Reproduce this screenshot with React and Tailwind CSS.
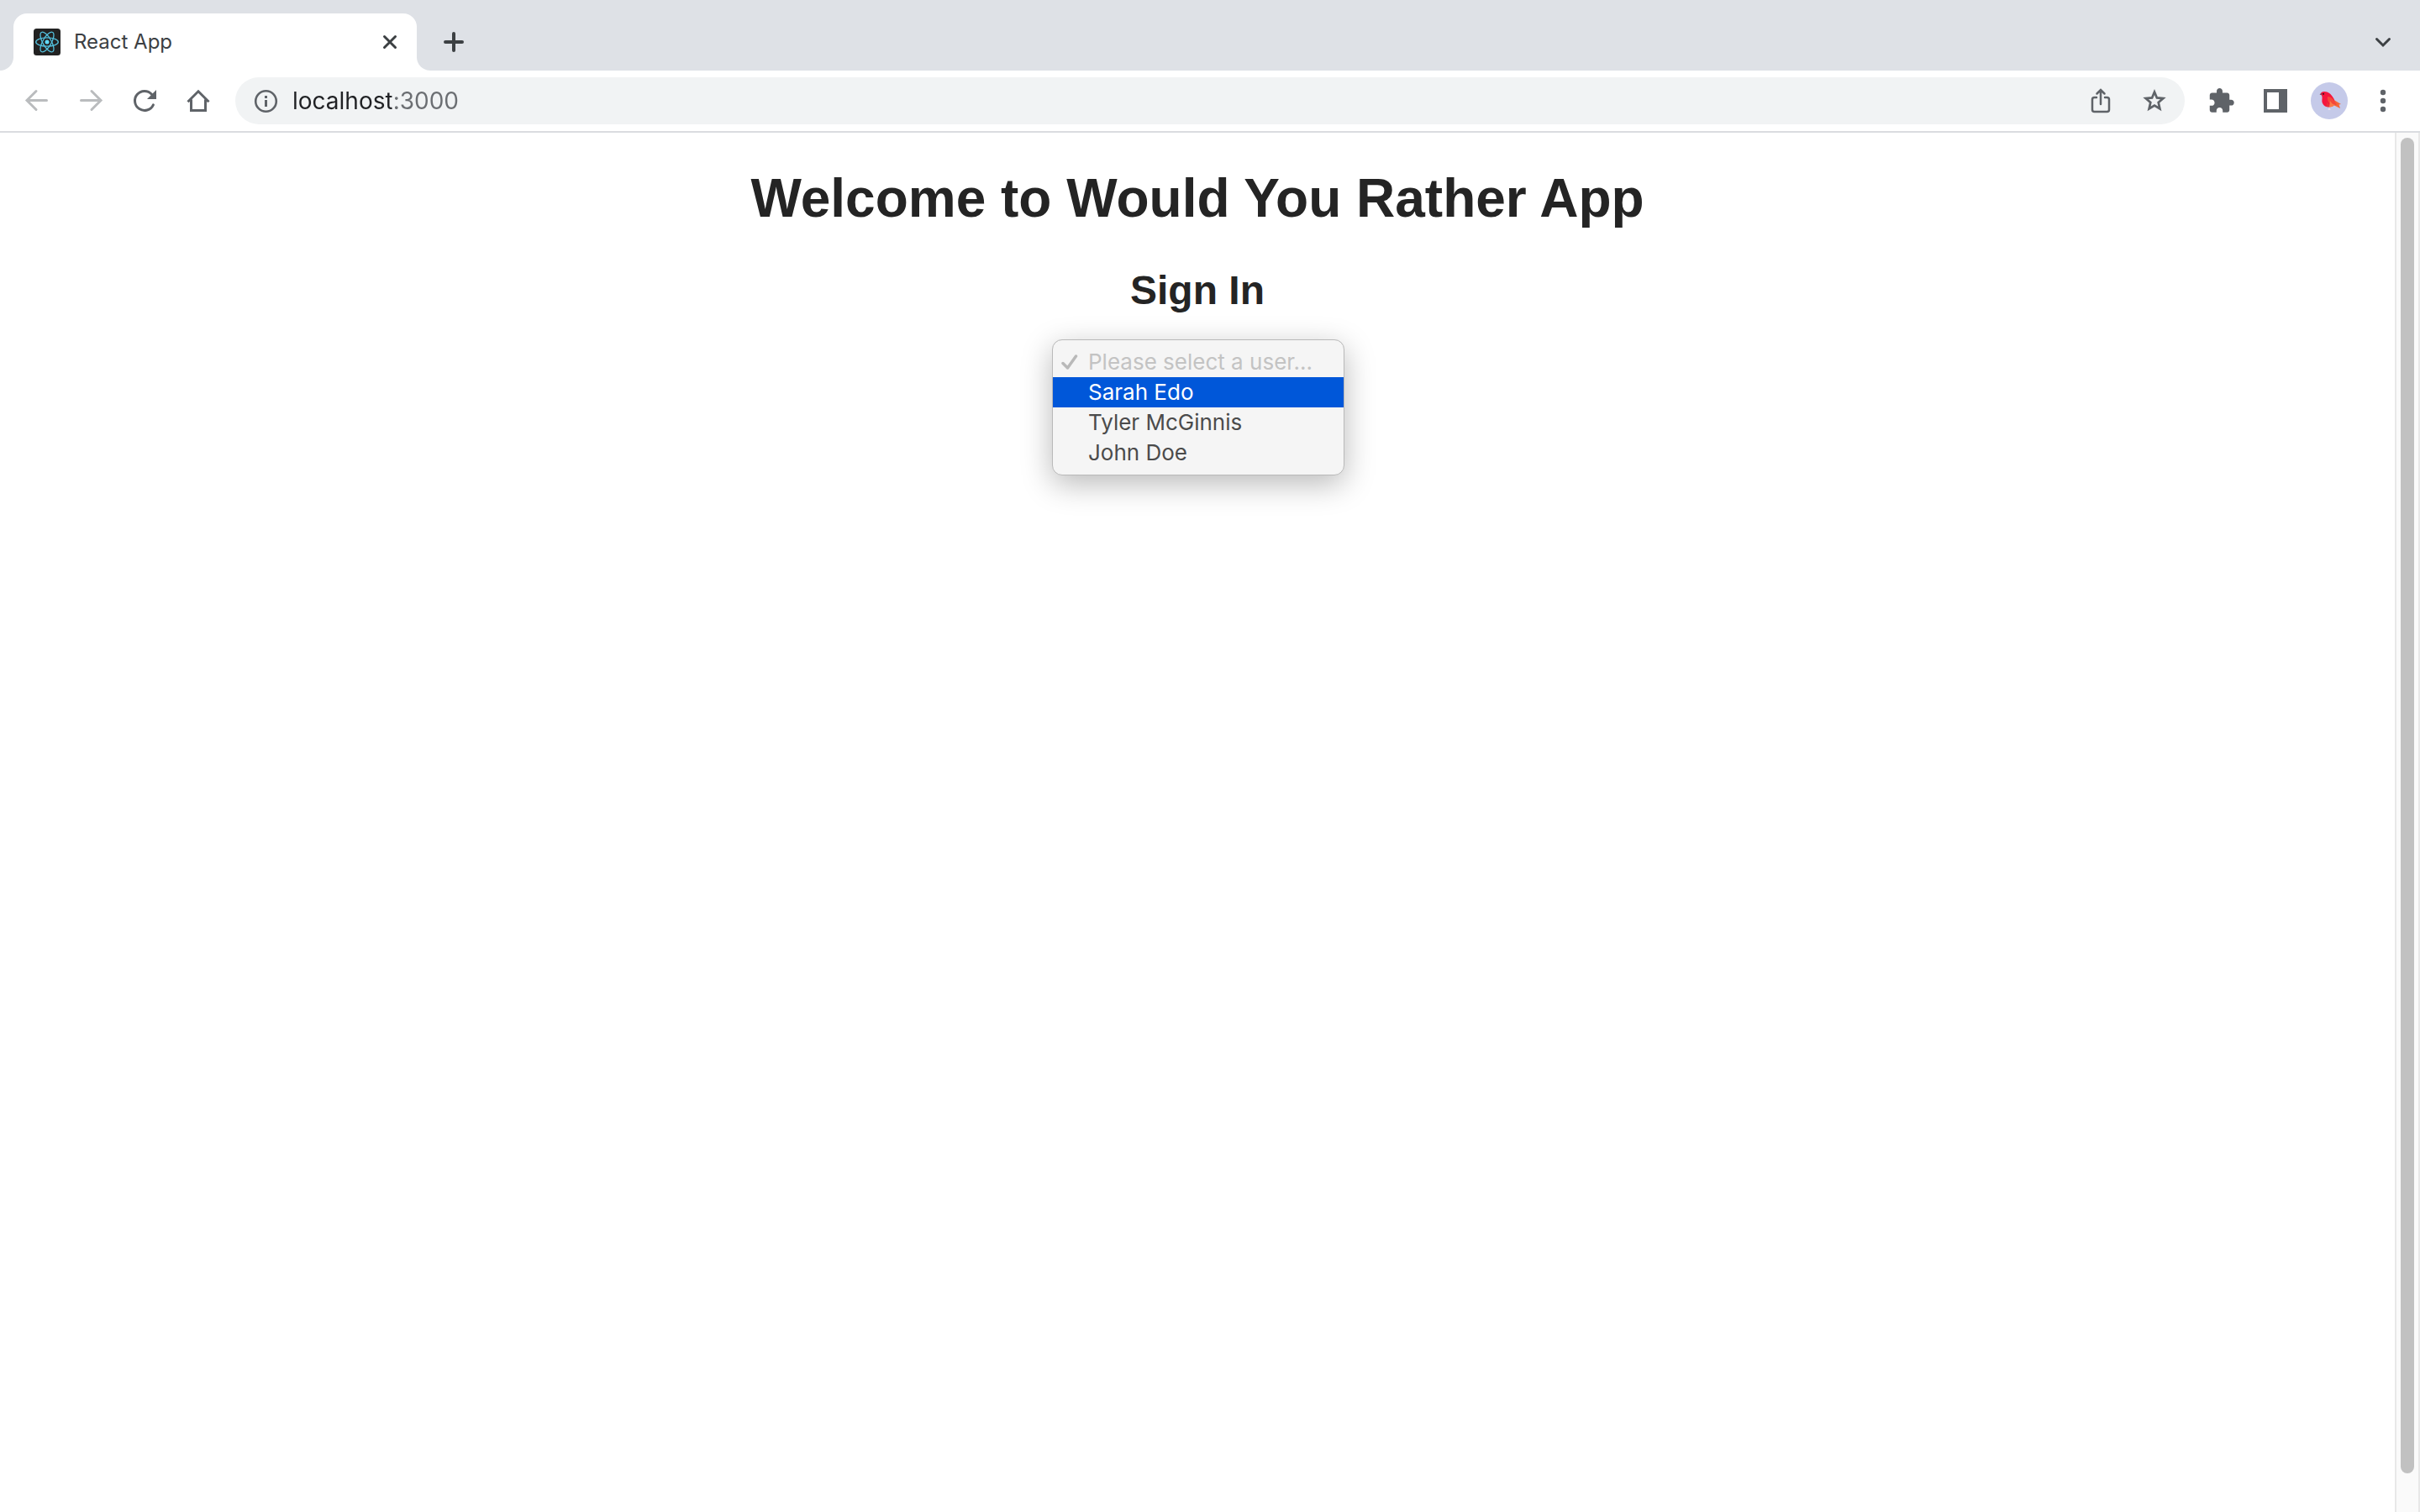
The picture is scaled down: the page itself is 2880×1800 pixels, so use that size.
import { useState } from "react";

const users = ["Sarah Edo", "Tyler McGinnis", "John Doe"];

function ReactLogo() {
  return (
    <svg viewBox="0 0 32 32" className="size-8 shrink-0" aria-hidden="true">
      <rect width="32" height="32" rx="3.5" fill="#222" />
      <g fill="none" stroke="#53c1de" strokeWidth="1.3">
        <ellipse cx="16" cy="16" rx="13.3" ry="5.1" />
        <ellipse cx="16" cy="16" rx="13.3" ry="5.1" transform="rotate(60 16 16)" />
        <ellipse cx="16" cy="16" rx="13.3" ry="5.1" transform="rotate(120 16 16)" />
      </g>
      <circle cx="16" cy="16" r="2.5" fill="#61dafb" />
    </svg>
  );
}

function Icon({ children, label, className = "text-[#5f6368]" }) {
  return (
    <button aria-label={label} className={`flex size-8 shrink-0 items-center justify-center ${className}`}>
      <svg viewBox="0 0 32 32" className="size-8" fill="none" stroke="currentColor" strokeWidth="3" strokeLinecap="round">
        {children}
      </svg>
    </button>
  );
}

function TabStrip() {
  return (
    <header className="flex h-[84px] items-end bg-[#dee1e6] pr-7">
      <div className="size-4 bg-white">
        <div className="size-4 rounded-br-2xl bg-[#dee1e6]" />
      </div>
      <div className="flex h-[68px] w-[480px] items-center rounded-t-2xl bg-white pr-4 pl-6">
        <ReactLogo />
        <span className="ml-4 flex-1 text-[24px] leading-8 text-[#3c4043]">React App</span>
        <Icon label="Close tab" className="text-[#3c4043]">
          <path d="M9.500 9.500 22.500 22.500M22.500 9.500 9.500 22.500" />
        </Icon>
      </div>
      <div className="size-4 bg-white">
        <div className="size-4 rounded-bl-2xl bg-[#dee1e6]" />
      </div>
      <div className="flex h-[68px] flex-1 items-center justify-between pl-3">
        <Icon label="New tab" className="text-[#3c4043]">
          <path strokeWidth="4" d="M16 6V26M6 16H26" />
        </Icon>
        <Icon label="Search tabs" className="text-[#3c4043]">
          <path d="M8.500 12.500 16 20 23.500 12.500" />
        </Icon>
      </div>
    </header>
  );
}

function Toolbar() {
  return (
    <nav className="flex h-[74px] items-center border-b-2 border-[#dadce0] bg-white pr-7 pl-7">
      <div className="flex gap-8">
        <Icon label="Back" className="text-[#babcbe]">
          <path d="M27.500 15.500H5M15 4.500 4 15.500 15 26.500" />
        </Icon>
        <Icon label="Forward" className="text-[#babcbe]">
          <path d="M4.500 15.500H27M17 4.500 28 15.500 17 26.500" />
        </Icon>
        <Icon label="Reload">
          <path d="M26.400 20.800A11.500 11.500 0 1 1 24.500 8.200" />
          <path d="M30 3V14H19Z" fill="currentColor" stroke="none" />
        </Icon>
        <Icon label="Home">
          <path strokeLinejoin="miter" strokeLinecap="butt" d="M3.500 17.300 16 4.800 28.500 17.300M7.500 14.500V27.500H24.500V14.500" />
        </Icon>
      </div>
      <div className="ml-7 flex h-14 flex-1 items-center rounded-full bg-[#f1f3f4] pr-5 pl-5">
        <Icon label="View site information">
          <circle cx="16.500" cy="16.500" r="12.300" strokeWidth="2.600" />
          <path d="M16.500 15V23M16.500 10V13" strokeLinecap="butt" />
        </Icon>
        <input
          aria-label="Address"
          defaultValue="localhost:3000"
          className="ml-4 min-w-0 flex-1 bg-[linear-gradient(to_right,#202124_118px,#6b6e72_118px)] bg-clip-text text-[28px] leading-10 text-transparent outline-none"
        />
        <div className="flex gap-8">
          <Icon label="Share">
            <path strokeWidth="2.500" d="M16 20V4M11.500 7.500 16 3 20.500 7.500M11 12H8.500Q6 12 6 14.500V26.500Q6 29 8.500 29H23.500Q26 29 26 26.500V14.500Q26 12 23.500 12H21" />
          </Icon>
          <Icon label="Bookmark this tab">
            <path
              strokeWidth="2.700"
              strokeLinejoin="miter"
              d="M16 5.500 18.900 12.400 26.400 13.100 20.700 18 22.400 25.400 16 21.500 9.600 25.400 11.300 18 5.600 13.100 13.100 12.400Z"
            />
          </Icon>
        </div>
      </div>
      <div className="ml-7 flex items-center gap-8">
        <Icon label="Extensions">
          <path
            fill="currentColor"
            stroke="none"
            transform="translate(-1 -0.500) scale(1.380)"
            d="M20.500 11H19V7c0-1.100-.9-2-2-2h-4V3.500C13 2.120 11.880 1 10.500 1S8 2.120 8 3.500V5H4c-1.100 0-1.990.9-1.990 2v3.800H3.500c1.490 0 2.700 1.210 2.700 2.700s-1.210 2.700-2.700 2.700H2V20c0 1.100.9 2 2 2h3.800v-1.500c0-1.490 1.210-2.700 2.700-2.700 1.490 0 2.700 1.210 2.700 2.700V22H17c1.100 0 2-.9 2-2v-4h1.500c1.380 0 2.500-1.120 2.500-2.500S21.880 11 20.500 11z"
          />
        </Icon>
        <Icon label="Side panel">
          <path fill="currentColor" stroke="none" fillRule="evenodd" d="M2 2H30V30H2ZM6 6V26H20V6Z" />
        </Icon>
        <button aria-label="Profile" className="-mx-1.5 size-11 shrink-0">
          <svg viewBox="0 0 44 44" className="size-11">
            <circle cx="22" cy="22" r="22" fill="#c5cae9" />
            <path d="M22 29V32.500M20.500 32.500H23.500" stroke="#e8dfe8" strokeWidth="1.200" />
            <path d="M26 20 36 26 33.500 26.500 35 31 31 29 27 27Z" fill="#f4673a" />
            <path d="M11.500 14Q12.500 11 16 11C21 11 24 14 26.500 18C29 21 29 25 26.500 28C23 30.500 16 30 14 25C12.500 21.500 14.500 18.500 13 15.500Z" fill="#f5163d" />
            <path d="M20 17Q24 17 26.500 20L31 26.500Q27 28 24 26Q19 23 20 17Z" fill="#f5473a" />
            <path d="M18.500 18Q18 24 24 28.500Q21 30 18 28.500Q20 25 18.500 18Z" fill="#e93238" />
            <path d="M23 22Q26 27 29 26.500Q26 30 22 29.500Z" fill="#fb7a48" />
            <path d="M10.500 14.500 13 12.500 13 15.200Z" fill="#7d4050" />
            <circle cx="15" cy="13.800" r="1.100" fill="#4a1020" />
          </svg>
        </button>
        <Icon label="Menu">
          <g fill="currentColor" stroke="none">
            <circle cx="16" cy="6" r="3.200" />
            <circle cx="16" cy="16" r="3.200" />
            <circle cx="16" cy="26" r="3.200" />
          </g>
        </Icon>
      </div>
    </nav>
  );
}

function UserPicker() {
  const [user, setUser] = useState("");
  return (
    <div className="relative mt-[30px] ml-0.5 w-[348px] text-[26px] leading-9">
      <select
        id="user"
        value={user}
        onChange={(e) => setUser(e.target.value)}
        className="block h-10 w-full appearance-none rounded-xl bg-[#f5f5f5] px-11 text-transparent"
      >
        <option value="" disabled>Please select a user...</option>
        {users.map((name) => (
          <option key={name}>{name}</option>
        ))}
      </select>
      <div
        role="listbox"
        aria-labelledby="sign-in"
        className="absolute inset-x-0 top-0 rounded-xl border border-[#b9b9b9] bg-[#f5f5f5] py-2 text-[#4b4b4b] shadow-[0_10px_36px_rgba(0,0,0,0.28)]"
      >
        <div role="option" aria-selected="true" aria-disabled="true" className="flex items-center pl-2.5 text-[#c3c3c3]">
          <svg viewBox="0 0 20 20" className="mr-3 size-5" fill="none" stroke="#b9b9b9" strokeWidth="3.5" strokeLinecap="round" strokeLinejoin="round" aria-hidden="true">
            <path d="M2 11.500 7.500 17 17.500 3" />
          </svg>
          Please select a user...
        </div>
        {users.map((name, i) => (
          <button
            key={name}
            role="option"
            aria-selected="false"
            onClick={() => setUser(name)}
            className={`block w-full pl-[42px] text-left ${i === 0 ? "bg-[#0057d9] text-white" : ""}`}
          >
            {name}
          </button>
        ))}
      </div>
    </div>
  );
}

export default function App() {
  return (
    <div className="flex min-h-screen flex-col bg-white font-['Inter',sans-serif]">
      <TabStrip />
      <Toolbar />
      <div className="flex flex-1">
        <main className="flex flex-1 flex-col items-center pt-[42px] text-[#242424]">
          <h1 className="font-['Liberation_Sans',Arial,sans-serif] text-[64px] leading-[72px] font-bold">
            Welcome to Would You Rather App
          </h1>
          <h2 id="sign-in" className="mt-[46px] font-['Liberation_Sans',Arial,sans-serif] text-[48px] leading-[56px] font-bold">
            <label htmlFor="user">Sign In</label>
          </h2>
          <UserPicker />
        </main>
        <div className="flex w-[30px] flex-col border-x-2 border-[#e8e8e8] bg-[#fafafa] px-[5px] pt-1.5 pb-[46px]">
          <div className="w-4 flex-1 rounded-full bg-[#c1c1c1]" />
        </div>
      </div>
    </div>
  );
}
